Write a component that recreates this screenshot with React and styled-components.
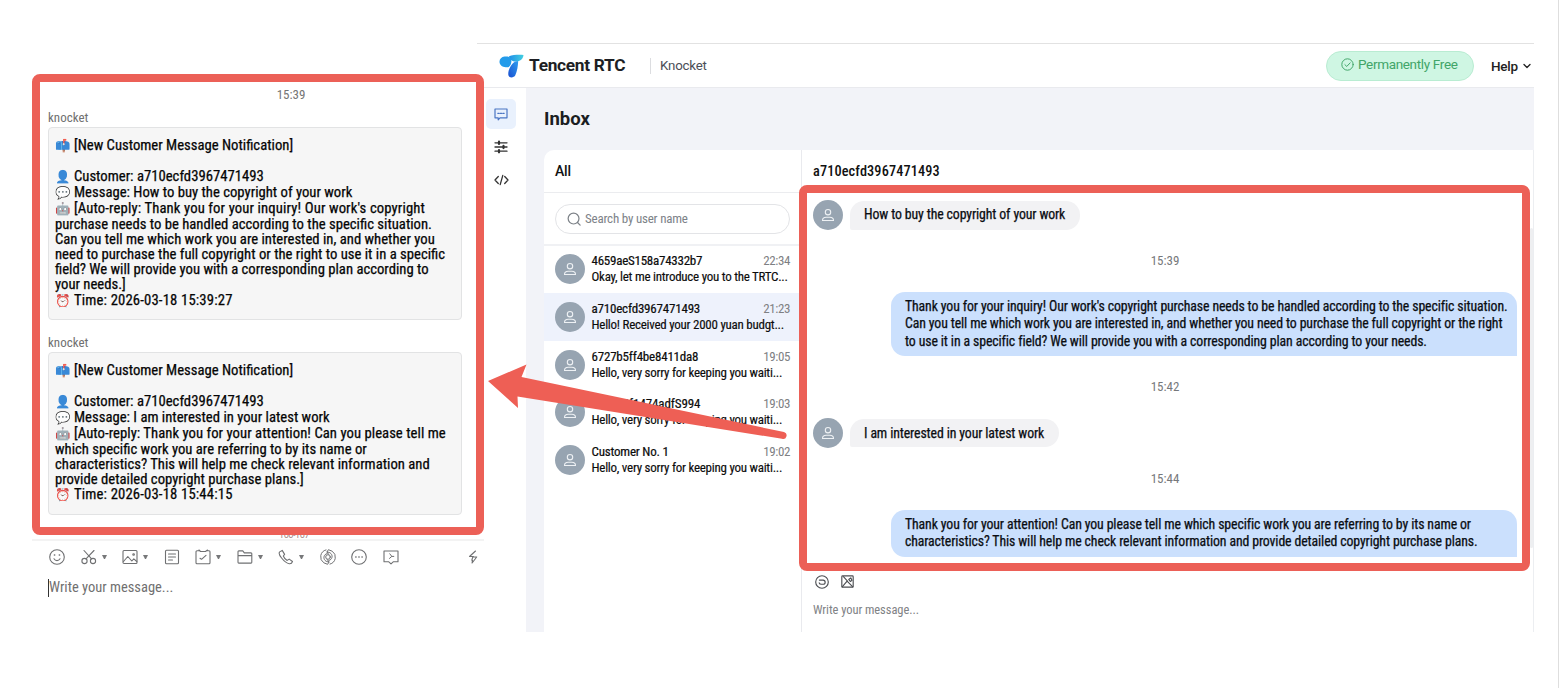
import React from 'react';
import styled, { createGlobalStyle } from 'styled-components';

const GlobalStyle = createGlobalStyle`
    * {
        box-sizing: border-box;
    }
    body {
        margin: 0;
        background: #fff;
        font-family: Roboto, 'Liberation Sans', sans-serif;
        color: #111;
        overflow: hidden;
    }
`

const Page = styled.div`
    position: relative;
    display: flex;
    align-items: flex-start;
    width: 1559px;
    height: 688px;
    padding: 43px 24px 0 32px;
    border-right: 1px solid #dedede;
    overflow: hidden;
`

/* ---------- red marks over the two windows ---------- */

const Frame = styled.div`
    position: absolute;
    left: ${p => p.$left}px;
    top: ${p => p.$top}px;
    width: ${p => p.$width}px;
    height: ${p => p.$height}px;
    border: 8px solid #ec6057;
    border-radius: 8px;
    pointer-events: none;
`

const Arrow = styled.svg`
    position: absolute;
    left: 480px;
    top: 355px;
    pointer-events: none;
`

/* ---------- left chat window ---------- */

const ChatWindow = styled.div`
    width: 445px;
    flex: none;
    display: flex;
    flex-direction: column;
    padding-top: 43px;
`

const Thread = styled.div`
    display: flex;
    flex-direction: column;
    height: 447px;
    padding: 0 15px 0 16px;
`

const Stamp = styled.div`
    text-align: center;
    font-size: 13px;
    line-height: 18px;
    color: #757575;
    font-stretch: 75%;
    width: 413px;
    padding-left: 73px;
`

const Sender = styled.div`
    height: ${p => p.$h}px;
    padding-top: ${p => p.$h - 17}px;
    font-size: 13px;
    line-height: 16px;
    font-stretch: 75%;
    color: #707070;
`

const Card = styled.div`
    width: 414px;
    border: 1px solid #e2e3e4;
    border-radius: 4px;
    background: #f6f6f6;
    padding: 10px 0 10.8px 6px;
    font-size: 14.7px;
    -webkit-text-stroke: 0.25px currentColor;
    font-stretch: 75%;
    line-height: 15.2px;
    color: #050505;
`

const Line = styled.div`
    display: flex;
    align-items: center;
    white-space: pre;
    height: ${p => (p.$tall ? 16 : 15.1)}px;
    margin-bottom: ${p => p.$gap || 0}px;
    letter-spacing: ${p => p.$ls || 0}px;
`

const Emoji = styled.span`
    width: 19px;
    flex: none;
    font-size: 12.5px;
    letter-spacing: 0;
    opacity: 0.85;
    -webkit-text-stroke: 0;
`

const Clipped = styled.div`
    height: 6px;
    overflow: hidden;
    padding-left: 247px;
    font-size: 9px;
    line-height: 10px;
    letter-spacing: -0.4px;
    color: #a3837f;

    span {
        display: block;
        margin-top: -3px;
    }
`

const Tools = styled.div`
    display: flex;
    align-items: center;
    gap: 15.5px;
    width: 452px;
    height: 34px;
    padding: 0 4px 0 17px;
    border-top: 2px solid #f3f3f3;
    color: #6f7072;
`

const Tool = styled.div`
    display: flex;
    align-items: center;
    gap: 5px;
    margin-left: ${p => (p.$last ? 'auto' : 0)};

    svg {
        display: block;
    }
`

const Caret = styled.span`
    width: 5px;
    border: 2.5px solid transparent;
    border-top: 4px solid #77787a;
    border-bottom: 0;
`

const Draft = styled.div`
    margin: 6px 0 0 16px;
    border-left: 1px solid #333;
    height: 18px;
    line-height: 18px;
    font-size: 14.5px;
    font-stretch: 75%;
    color: #707070;
    white-space: nowrap;
`

/* ---------- inbox window ---------- */

const Desk = styled.div`
    width: 1057px;
    height: 589px;
    flex: none;
    display: flex;
    flex-direction: column;
    border-top: 1px solid #e2e2e2;
`

const Header = styled.div`
    display: flex;
    align-items: center;
    height: 44px;
    flex: none;
    padding: 0 3px 0 22px;
    border-bottom: 1px solid #e9eaee;
`

const Brand = styled.div`
    font-size: 17.3px;
    font-weight: 700;
    letter-spacing: -0.3px;
    color: #1d1f24;
    width: 121px;
    margin-left: 5px;
    padding-bottom: 1px;
`

const Product = styled.div`
    border-left: 1px solid #dcdde0;
    height: 16px;
    line-height: 15px;
    padding-left: 9px;
    font-size: 13.3px;
    letter-spacing: -0.2px;
    color: #4b4e57;
    flex: 1;
`

const Free = styled.div`
    display: flex;
    align-items: center;
    gap: 4px;
    width: 148px;
    height: 30px;
    padding: 0 0 3px 14px;
    border: 1px solid #b9ecd2;
    border-radius: 15px;
    background: #cff6e3;
    color: #41a568;
    font-size: 13.5px;
    letter-spacing: -0.33px;
    white-space: nowrap;

    svg {
        margin-top: 1px;
    }
`

const Help = styled.div`
    display: flex;
    align-items: center;
    gap: 5px;
    margin-left: 17px;
    padding-top: 1px;
    font-size: 13.5px;
    font-weight: 500;
    letter-spacing: -0.2px;
    color: #222;
`

const Body = styled.div`
    display: flex;
    flex: 1;
    min-height: 0;
`

const Side = styled.div`
    width: 49px;
    padding: 11px 0 0 9px;
    display: flex;
    flex-direction: column;
    gap: 3px;
`

const SideItem = styled.div`
    display: flex;
    align-items: center;
    justify-content: center;
    width: 30px;
    height: 30px;
    border-radius: 5px;
    background: ${p => (p.$on ? '#e9f1fd' : 'transparent')};
    color: ${p => (p.$on ? '#4b76c4' : '#333')};
`

const Content = styled.div`
    flex: 1;
    display: flex;
    flex-direction: column;
    padding-left: 18px;
    background: #f2f3f8;
`

const Title = styled.h1`
    margin: 0;
    height: 62px;
    line-height: 62px;
    font-size: 18.5px;
    font-weight: 700;
    color: #1b1d22;
`

const Panels = styled.div`
    display: flex;
    flex: 1;
    background: #fff;
    border-radius: 10px 0 0 0;
    border-right: 1px solid #eceef1;
`

const List = styled.div`
    width: 258px;
    border-right: 1px solid #e9eaee;
`

const ListHead = styled.div`
    height: 43px;
    line-height: 42px;
    padding-left: 11px;
    border-bottom: 1px solid #ebecef;
    font-size: 14px;
    font-weight: 500;
    letter-spacing: -0.2px;
`

const SearchArea = styled.div`
    height: 52.5px;
    padding: 11px 11px 0;
    border-bottom: 2px solid #f0f1f4;
`

const SearchBox = styled.div`
    display: flex;
    align-items: center;
    gap: 4px;
    height: 30px;
    padding: 0 0 1px 11px;
    border: 1px solid #e3e4e7;
    border-radius: 15px;
    font-size: 13px;
    font-stretch: 75%;
    letter-spacing: -0.2px;
    color: #7d8288;
`

const Contact = styled.div`
    display: flex;
    align-items: center;
    height: 47.7px;
    padding: 0 11px 0 11px;
    background: ${p => (p.$on ? '#eef2fc' : 'transparent')};
`

const Avatar = styled.div`
    display: flex;
    align-items: center;
    justify-content: center;
    flex: none;
    width: 30px;
    height: 30px;
    border-radius: 50%;
    background: #97a4b1;
    color: #eef1f4;
`

const Lines = styled.div`
    flex: 1;
    padding-left: 6.5px;
    white-space: nowrap;
    font-stretch: 75%;
    font-size: 13px;
    line-height: 16px;
    color: #0c0c0c;
`

const Name = styled.div`
    display: flex;
    justify-content: space-between;
    letter-spacing: ${p => p.$ls}px;
    -webkit-text-stroke: 0.2px currentColor;
`

const Preview = styled.div`
    letter-spacing: -0.26px;
    -webkit-text-stroke: 0.15px currentColor;
`

const Clock = styled.span`
    letter-spacing: -0.4px;
    color: #7e8083;
    -webkit-text-stroke: 0;
`

const Talk = styled.div`
    position: relative;
    flex: 1;
    display: flex;
    flex-direction: column;
    padding: 0 16px 0 11px;
`

const ScrollThumb = styled.div`
    position: absolute;
    right: 0;
    top: 78px;
    width: 3px;
    height: 320px;
    border-radius: 2px;
    background: #eeeff1;
`

const TalkHead = styled.div`
    height: 50px;
    line-height: 42px;
    font-size: 14.3px;
    font-weight: 500;
    font-stretch: 75%;
    letter-spacing: 0.12px;
`

const Row = styled.div`
    display: flex;
    align-items: center;
    height: ${p => p.$h}px;
`

const Bubble = styled.div`
    height: ${p => p.$h}px;
    width: ${p => p.$w}px;
    margin-left: ${p => (p.$mine ? 'auto' : '7px')};
    padding: ${p => (p.$mine ? '6px 0 0 14px' : '5.5px 0 0 14px')};
    border-radius: ${p => (p.$mine ? '14px 14px 0 14px' : '14px 14px 14px 2px')};
    background: ${p => (p.$mine ? '#cbe0fd' : '#f2f2f4')};
    font-size: 13.8px;
    -webkit-text-stroke: 0.25px currentColor;
    font-stretch: 75%;
    letter-spacing: -0.12px;
    line-height: 17.7px;
    color: #0a0d12;
    white-space: nowrap;
`

const Moment = styled.div`
    display: flex;
    align-items: center;
    justify-content: center;
    height: ${p => p.$h}px;
    padding-bottom: 1px;
    font-size: 13px;
    font-stretch: 75%;
    color: #76787b;
`

const Attach = styled.div`
    display: flex;
    gap: 12px;
    padding: 18px 0 0 2px;
    color: #4c4e52;

    svg {
        display: block;
    }
`

const Reply = styled.div`
    margin-top: 13px;
    font-size: 12.5px;
    line-height: 16px;
    font-stretch: 75%;
    letter-spacing: -0.06px;
    color: #808285;
`

/* ---------- icons ---------- */

const Icon = ({ size = 16, w = 1.1, box = 16, children }) => (
    <svg width={size} height={size} viewBox={`0 0 ${box} ${box}`} fill="none" stroke="currentColor"
        strokeWidth={w} strokeLinecap="round" strokeLinejoin="round">{children}</svg>
)

const Smile = () => (
    <Icon>
        <circle cx="8" cy="8" r="7.3" />
        <path d="M5 9.800c1.400 2.400 4.600 2.400 6 0" />
        <path d="M5.400 6h.3M10.300 6h.3" strokeWidth="1.500" />
    </Icon>
)

const Scissors = () => (
    <Icon>
        <circle cx="3.500" cy="12" r="2.600" />
        <circle cx="12" cy="12" r="2.600" />
        <path d="M3 1.500l7.600 8.400M13 1.500L5 9.900" />
    </Icon>
)

const Picture = () => (
    <Icon>
        <rect x="1" y="1.500" width="14" height="13" rx="1" />
        <path d="M1.500 12.500l4.300-5 4 4.500 2-2.200 3 2.700" />
        <circle cx="11.600" cy="5.500" r=".8" />
    </Icon>
)

const Note = () => (
    <Icon>
        <rect x="1.500" y="1.200" width="13" height="13.600" rx="1" />
        <path d="M4.500 5h7M4.500 8h7M4.500 11h4" />
    </Icon>
)

const Task = () => (
    <Icon>
        <path d="M4 1.800H2a1 1 0 0 0-1 1v11a1 1 0 0 0 1 1h12a1 1 0 0 0 1-1v-11a1 1 0 0 0-1-1h-1.500M4 1l1.500 1.500h5L12.500 1" />
        <path d="M5 9.300l1.500 1L11 6.300" />
    </Icon>
)

const Folder = () => (
    <Icon>
        <path d="M1 13.300V2.700a.8.8 0 0 1 .8-.8h4l1.500 2H14a.8.8 0 0 1 .8.8v8.600a.8.8 0 0 1-.8.8H1.800a.8.8 0 0 1-.8-.8zM1 6.600h13.800" />
    </Icon>
)

const Phone = () => (
    <Icon>
        <path d="M4.200 1.400L1.700 2.900c-.8.7-.3 3.300 1.900 6.100 2.300 3 5.300 5.300 7.700 5.700 1.500.2 2.800-1 3.200-2.200l-3.300-2.400-2 1.300C7.700 10.600 6 8.800 5.300 7l1.300-1.600z" />
    </Icon>
)

/* two arcs chasing each other, each with a hooked inner end */
const Swirl = () => (
    <Icon w={1}>
        <path d="M6 .9A7.200 7.200 0 0 0 3.800 13.800l3.800 1.500 1.400-2.300-1.600-2.300" />
        <path d="M9 13C5.500 13 3.500 10.500 4 7.800 4.300 6 5.500 5 7 4.600" />
        <path d="M10 15.100A7.200 7.200 0 0 0 12.200 2.200L8.400.7 7 3l1.600 2.300" />
        <path d="M7 3c3.500 0 5.500 2.500 5 5.200-.3 1.800-1.500 2.800-3 3.200" />
        <circle cx="8" cy="8" r="2.300" />
    </Icon>
)

const More = () => (
    <Icon>
        <circle cx="8" cy="8" r="7.300" />
        <path d="M4.800 8h.2M7.900 8h.2M11 8h.2" strokeWidth="1.600" />
    </Icon>
)

const ChatPlay = () => (
    <Icon>
        <path d="M1 2h14v10.800h-4.800L8 14.800l-2.200-2H1z" />
        <path d="M6.800 4.800l2 2.600L6.500 9.400M8.800 7.400h2" strokeWidth="1" />
    </Icon>
)

const Bolt = () => (
    <Icon size={14} box={14}>
        <path d="M9.500 1L3.500 6.500h4M6.500 10.200l-.4 2.800 4.600-6H6.800l-1 3.200" />
    </Icon>
)

const Logo = () => (
    <svg width="25" height="24" viewBox="0 0 25 24">
        <defs>
            <linearGradient id="wing" x1="0" x2="1"><stop offset="0" stopColor="#1f8fe8" /><stop offset="1" stopColor="#43cfe0" /></linearGradient>
            <linearGradient id="stem" x1="1" y1="0" x2="0" y2="1"><stop offset="0" stopColor="#2e9df0" /><stop offset="1" stopColor="#1a4fd0" /></linearGradient>
        </defs>
        <path d="M10 2.300C14 .8 20 .6 24.500 1c-.4 4.500-3.500 6.100-7.500 6.500-3 .3-6-1-7-5.200z" fill="url(#wing)" />
        <path d="M5.500 2.600c4-.8 7 .7 6.900 4.700-.1 2.800-1.200 5.200-3.200 6C5 13.600 1 12 .5 8.200.2 5.200 2.500 3.100 5.500 2.600z" fill="#239bea" />
        <path d="M19.200 7c-.2 5.200-1 10.200-2.900 14.300-1.200 2.600-6 3-6.800.3-.9-3 .9-8.600 3.700-11.700 1.600-1.800 3.600-2.900 6-2.900z" fill="url(#stem)" />
    </svg>
)

const Person = () => (
    <Icon size={14} box={14} w={1.1}>
        <circle cx="7" cy="4.200" r="2.700" />
        <path d="M1.500 12.500c0-2.300 1.500-3.200 3.700-3.200h3.600c2.200 0 3.700.9 3.700 3.200z" />
    </Icon>
)

const ChatIcon = () => (
    <Icon size={14} box={14} w={1.200}>
        <path d="M1 2h12v8.800H6l-1.800 2v-2H1z" />
        <path d="M3.800 6.300h1.400M6.300 6.300h1.400M8.800 6.300h1.400" />
    </Icon>
)

const Sliders = () => (
    <Icon size={14} box={14} w={1.300}>
        <path d="M1 2.800h12M1 7h12M1 11.200h12" />
        <path d="M5 1.700v2.200M9.500 5.900v2.200M5 10.100v2.200" strokeWidth="2.200" />
    </Icon>
)

const Code = () => (
    <Icon size={15} box={15} w={1.300}>
        <path d="M4.300 3.500L1 7 4.300 10.500M10.700 3.500L14 7 10.700 10.500M8.800 2.300L6.200 11.700" />
    </Icon>
)

/* ---------- data ---------- */

const NOTICES = [
    {
        h: 23,
        customer: 'a710ecfd3967471493',
        message: 'How to buy the copyright of your work',
        reply: [
            "[Auto-reply: Thank you for your inquiry! Our work's copyright",
            'purchase needs to be handled according to the specific situation.',
            'Can you tell me which work you are interested in, and whether you',
            'need to purchase the full copyright or the right to use it in a specific',
            'field? We will provide you with a corresponding plan according to',
            'your needs.]',
        ],
        ls: 0.12,
        time: '2026-03-18 15:39:27',
    },
    {
        h: 31.400,
        customer: 'a710ecfd3967471493',
        message: 'I am interested in your latest work',
        reply: [
            '[Auto-reply: Thank you for your attention! Can you please tell me',
            'which specific work you are referring to by its name or',
            'characteristics? This will help me check relevant information and',
            'provide detailed copyright purchase plans.]',
        ],
        ls: 0.04,
        time: '2026-03-18 15:44:15',
    },
]

const CONTACTS = [
    { name: '4659aeS158a74332b7', text: 'Okay, let me introduce you to the TRTC...', time: '22:34', ls: -0.25 },
    { name: 'a710ecfd3967471493', text: 'Hello! Received your 2000 yuan budgt...', time: '21:23', ls: -0.2, on: true },
    { name: '6727b5ff4be8411da8', text: 'Hello, very sorry for keeping you waiti...', time: '19:05', ls: -0.2 },
    { name: '8b3e06f1474adfS994', text: 'Hello, very sorry for keeping you waiti...', time: '19:03', ls: -0.1 },
    { name: 'Customer No. 1', text: 'Hello, very sorry for keeping you waiti...', time: '19:02', ls: -0.2 },
]

const TOOLS = [
    [Smile], [Scissors, true], [Picture, true], [Note], [Task, true],
    [Folder, true], [Phone, true], [Swirl], [More], [ChatPlay],
]

const Notice = ({ n }) => (
    <>
        <Sender $h={n.h}>knocket</Sender>
        <Card>
            <Line $tall $gap={15}><Emoji>📫</Emoji>[New Customer Message Notification]</Line>
            <Line $tall><Emoji>👤</Emoji>Customer: {n.customer}</Line>
            <Line $tall><Emoji>💬</Emoji>Message: {n.message}</Line>
            {n.reply.map((line, i) => (
                <Line key={line} $tall={i === 0} $ls={i === 0 ? n.ls : 0}>{i === 0 && <Emoji>🤖</Emoji>}{line}</Line>
            ))}
            <Line $tall $ls={0.15}><Emoji>⏰</Emoji>Time: {n.time}</Line>
        </Card>
    </>
)

const App = () => (
    <Page>
        <GlobalStyle />

        <ChatWindow>
            <Thread>
                <Stamp>15:39</Stamp>
                {NOTICES.map(n => <Notice key={n.time} n={n} />)}
            </Thread>
            <Clipped><span>166-167</span></Clipped>
            <Tools>
                {TOOLS.map(([Glyph, menu], i) => (
                    <Tool key={i}><Glyph />{menu && <Caret />}</Tool>
                ))}
                <Tool $last><Bolt /></Tool>
            </Tools>
            <Draft>Write your message...</Draft>
        </ChatWindow>

        <Desk>
            <Header>
                <Logo />
                <Brand>Tencent RTC</Brand>
                <Product>Knocket</Product>
                <Free>
                    <Icon size={13} w={1.200}>
                        <circle cx="8" cy="8" r="7" />
                        <path d="M4.800 8.200l2.300 2.200 4.200-4.400" />
                    </Icon>
                    Permanently Free
                </Free>
                <Help>
                    Help
                    <Icon size={8} box={8} w={1.300}><path d="M1 2.500l3 3 3-3" /></Icon>
                </Help>
            </Header>
            <Body>
                <Side>
                    <SideItem $on><ChatIcon /></SideItem>
                    <SideItem><Sliders /></SideItem>
                    <SideItem><Code /></SideItem>
                </Side>
                <Content>
                    <Title>Inbox</Title>
                    <Panels>
                        <List>
                            <ListHead>All</ListHead>
                            <SearchArea>
                                <SearchBox>
                                    <Icon size={14} w={1.400}><circle cx="7.500" cy="7.500" r="6.200" /><path d="M12 12l3 3" /></Icon>
                                    Search by user name
                                </SearchBox>
                            </SearchArea>
                            {CONTACTS.map(c => (
                                <Contact key={c.name} $on={c.on}>
                                    <Avatar><Person /></Avatar>
                                    <Lines>
                                        <Name $ls={c.ls}>{c.name}<Clock>{c.time}</Clock></Name>
                                        <Preview>{c.text}</Preview>
                                    </Lines>
                                </Contact>
                            ))}
                        </List>
                        <Talk>
                            <TalkHead>a710ecfd3967471493</TalkHead>
                            <Row $h={30}>
                                <Avatar><Person /></Avatar>
                                <Bubble $h={29} $w={230}>How to buy the copyright of your work</Bubble>
                            </Row>
                            <Moment $h={61}>15:39</Moment>
                            <Row $h={65}>
                                <Bubble $mine $h={64} $w={626}>
                                    Thank you for your inquiry! Our work's copyright purchase needs to be handled according to the specific situation.<br />
                                    Can you tell me which work you are interested in, and whether you need to purchase the full copyright or the right<br />
                                    to use it in a specific field? We will provide you with a corresponding plan according to your needs.
                                </Bubble>
                            </Row>
                            <Moment $h={62}>15:42</Moment>
                            <Row $h={30}>
                                <Avatar><Person /></Avatar>
                                <Bubble $h={28} $w={209}>I am interested in your latest work</Bubble>
                            </Row>
                            <Moment $h={61}>15:44</Moment>
                            <Row $h={48}>
                                <Bubble $mine $h={47} $w={626}>
                                    Thank you for your attention! Can you please tell me which specific work you are referring to by its name or<br />
                                    characteristics? This will help me check relevant information and provide detailed copyright purchase plans.
                                </Bubble>
                            </Row>
                            <Attach>
                                <Icon size={14} w={1.300}>
                                    <circle cx="8" cy="8" r="7.200" />
                                    <path d="M5 5.800h4.200a2.300 2.300 0 0 1 0 4.800H7.500C6 10.600 5 10 4.800 9" />
                                </Icon>
                                <Icon size={13} w={1.400}>
                                    <rect x="1" y="1" width="14" height="14" rx="1" />
                                    <path d="M1.500 14.500l6-7 7 7M3 2l5 5.500M9.500 5.500l2.500-2 1.500 3-2 1.500z" />
                                </Icon>
                            </Attach>
                            <Reply>Write your message...</Reply>
                            <ScrollThumb />
                        </Talk>
                    </Panels>
                </Content>
            </Body>
        </Desk>

        <Frame $left={32} $top={74} $width={452} $height={461} />
        <Frame $left={799} $top={185} $width={731} $height={386} />
        <Arrow width="310" height="90" viewBox="0 0 310 90">
            <path d="M8 26L46.500 9.500 41.500 22 304 77a3.500 3.500 0 0 1-2 6.800L37.500 41.500 38 53z" fill="#ee5f55" />
        </Arrow>
    </Page>
)

export default App
